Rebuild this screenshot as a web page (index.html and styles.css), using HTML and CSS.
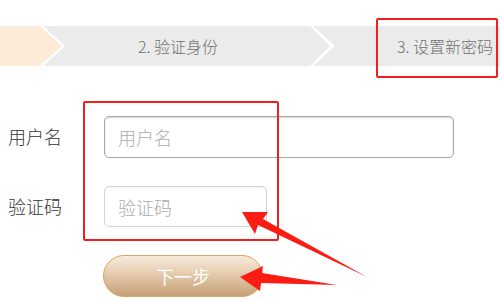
FILE: index.html
```html
<!DOCTYPE html>
<html lang="zh">
<head>
<meta charset="utf-8">
<link rel="stylesheet" href="styles.css">
</head>
<body>
<div class="page">
  <div class="steps">
    <div class="step step-1"></div>
    <div class="step step-2"><span>2. 验证身份</span></div>
    <div class="step step-3"><span>3. 设置新密码</span></div>
  </div>
  <form class="form">
    <label class="label" for="u">用户名</label>
    <input class="field field-user" id="u" type="text" placeholder="用户名">
    <label class="label" for="c">验证码</label>
    <input class="field field-code" id="c" type="text" placeholder="验证码">
    <div></div>
    <button class="next" type="button">下一步</button>
  </form>
  <div class="mark mark-step"></div>
  <div class="mark mark-form"></div>
  <svg class="arrows" width="500" height="301" viewBox="0 0 500 301">
    <polygon points="242,212 268,212 263,219 367,277 258,225 255,234"/>
    <polygon points="240,277 263,266 262,273 337,285 261,283 260,291"/>
  </svg>
</div>
</body>
</html>
```
FILE: styles.css
```css
html, body {
  margin: 0;
  padding: 0;
  background: #fff;
}
body {
  font-family: "Noto Sans CJK SC", "Noto Sans", sans-serif;
  font-weight: 300;
  width: 500px;
  height: 301px;
  overflow: hidden;
}
.page {
  position: relative;
  box-sizing: border-box;
  width: 500px;
  height: 301px;
  padding-top: 26px;
  overflow: hidden;
}
.steps {
  display: flex;
  height: 40px;
}
.step {
  height: 40px;
  display: flex;
  align-items: center;
  font-size: 16px;
  color: #707070;
  white-space: nowrap;
}
.step-1 {
  width: 62px;
  background: #fcebd6;
  clip-path: polygon(0 0, 40px 0, 62px 20px, 40px 40px, 0 40px);
}
.step-2 {
  width: 287px;
  margin-left: -19px;
  background: #ebebeb;
  padding-left: 95px;
  box-sizing: border-box;
  clip-path: polygon(0 0, 267px 0, 287px 20px, 267px 40px, 0 40px, 22px 20px);
}
.step-3 {
  flex: 1;
  margin-left: -17px;
  background: #ebebeb;
  padding-left: 84px;
  box-sizing: border-box;
  clip-path: polygon(0 0, 100% 0, 100% 40px, 0 40px, 22px 20px);
}
.form {
  display: grid;
  grid-template-columns: 96px auto;
  align-items: center;
  justify-items: start;
  row-gap: 28px;
  margin: 50px 0 0 0;
  padding-left: 8px;
}
.label {
  font-size: 18px;
  color: #333;
  line-height: 24px;
  margin-top: -2px;
}
.field {
  box-sizing: border-box;
  height: 42px;
  margin: 0;
  border: 1px solid #a8a8a8;
  border-radius: 5px;
  box-shadow: inset 0 1px 2px rgba(0,0,0,0.18);
  padding: 0 13px;
  font-family: inherit;
  font-weight: 300;
  font-size: 18px;
  color: #333;
  background: #fff;
  outline: none;
}
.field::placeholder {
  color: #ababab;
}
.field-user {
  width: 350px;
}
.field-code {
  width: 163px;
  height: 41px;
  border-color: #d4d4d4;
  box-shadow: inset 0 1px 2px rgba(0,0,0,0.06);
}
.next {
  margin-left: -1px;
  width: 160px;
  height: 42px;
  border: 1px solid #dba462;
  border-radius: 21px;
  background: linear-gradient(to bottom, #f7ebdc 0%, #e4cbad 45%, #c6a078 100%);
  color: #fff;
  font-family: inherit;
  font-weight: 400;
  font-size: 18px;
  padding: 0;
}
.mark {
  position: absolute;
  border: 2px solid #f31f1f;
  border-radius: 2px;
  box-sizing: border-box;
}
.mark-step {
  left: 376px;
  top: 18px;
  width: 122px;
  height: 60px;
}
.mark-form {
  left: 83px;
  top: 101px;
  width: 196px;
  height: 140px;
}
.arrows {
  position: absolute;
  left: 0;
  top: 0;
  fill: #fb1c14;
}
```
